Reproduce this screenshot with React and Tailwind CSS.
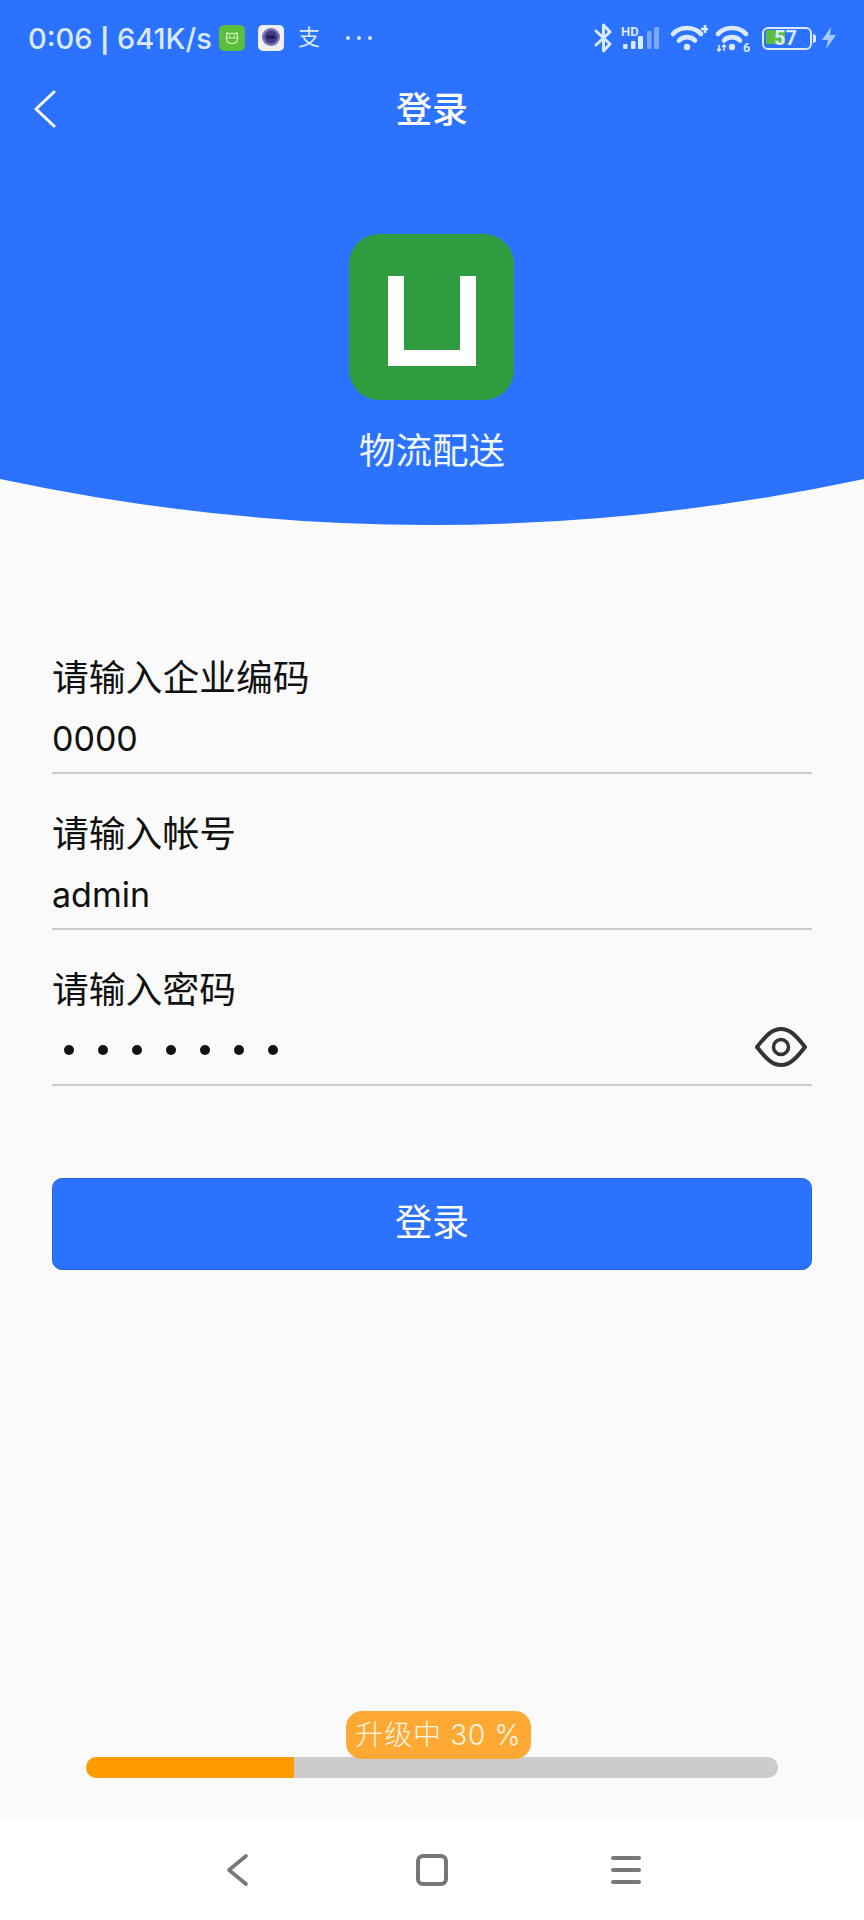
import React from 'react';

const cjk = "font-['Roboto','Noto_Sans_CJK_SC',sans-serif]";
const inter = "font-['Inter','Noto_Sans_CJK_SC',sans-serif]";

const GreenAppIcon = () => (
  <svg width="26" height="26" viewBox="0 0 26 26" className="block">
    <rect width="26" height="26" rx="5" fill="#5cbd3c" />
    <path d="M8 7.5 L9.5 9 C11.5 8.2 14.5 8.2 16.5 9 L18 7.5 L18.5 12 C19.5 15 18 18.5 13 18.5 C8 18.5 6.5 15 7.5 12 Z M8 13 H18" fill="none" stroke="#d8f5c8" strokeWidth="1.1" strokeLinejoin="round" />
    <circle cx="11" cy="11" r="0.8" fill="#d8f5c8" />
    <circle cx="15" cy="11" r="0.8" fill="#d8f5c8" />
  </svg>
);

const CameraAppIcon = () => (
  <svg width="26" height="26" viewBox="0 0 26 26" className="block">
    <rect width="26" height="26" rx="5" fill="#eef0f6" />
    <circle cx="13" cy="12" r="9" fill="#7b6fb0" />
    <circle cx="13" cy="12" r="6.5" fill="#3f3a86" />
    <rect x="9" y="10.5" width="8" height="3" rx="1" fill="#1d1b4d" />
  </svg>
);

const Bluetooth = () => (
  <svg width="19" height="30" viewBox="0 0 19 30" className="block">
    <path d="M2 8 L16 21 L9.5 28 V2 L16 9 L2 22" fill="none" stroke="#dbeaff" strokeWidth="3" strokeLinejoin="round" strokeLinecap="round" />
  </svg>
);

const HdSignal = () => (
  <div className="relative w-[38px] h-[24px]">
    <span className="absolute left-0 top-[-1px] text-[13px] leading-[13px] font-bold text-[#dbeaff] font-['Roboto',sans-serif]">HD</span>
    <svg width="38" height="24" viewBox="0 0 38 24" className="block">
      <rect x="2" y="18" width="4.5" height="5" rx="1" fill="#dbeaff" />
      <rect x="10" y="15" width="4.5" height="8" rx="1" fill="#dbeaff" />
      <rect x="17" y="10" width="5" height="13" rx="1" fill="#dbeaff" />
      <rect x="26" y="5" width="4.5" height="18" rx="1" fill="#7aa8ff" />
      <rect x="33" y="1" width="5" height="22" rx="1" fill="#7aa8ff" />
    </svg>
  </div>
);

const WifiArcs = () => (
  <>
    <path d="M3 9 C10 1 24 1 31 9" fill="none" stroke="#dbeaff" strokeWidth="4.6" strokeLinecap="round" />
    <path d="M9 15.5 C13 11 21 11 25 15.5" fill="none" stroke="#dbeaff" strokeWidth="4.6" strokeLinecap="round" />
    <circle cx="17" cy="22" r="3.2" fill="#dbeaff" />
  </>
);

const WifiPlus = () => (
  <svg width="39" height="26" viewBox="0 0 39 26" className="block">
    <g transform="translate(1 0)"><WifiArcs /></g>
    <path d="M36 0 V8 M32 4 H39" stroke="#dbeaff" strokeWidth="2.6" />
  </svg>
);

const Wifi6 = () => (
  <svg width="37" height="27" viewBox="0 0 37 27" className="block">
    <WifiArcs />
    <path d="M4 20 V26 M2 24 L4 26 L6 24 M9 26 V20 M7 22 L9 20 L11 22" fill="none" stroke="#dbeaff" strokeWidth="1.6" />
    <text x="28" y="27" fontSize="12.5" fontWeight="700" fill="#dbeaff" fontFamily="Roboto, sans-serif">6</text>
  </svg>
);

const Battery = () => (
  <div className="flex items-center gap-[1px]">
    <div className="relative w-[50px] h-[23px] rounded-[6px] border-[2.5px] border-[#dbeaff]">
      <div className="h-[14px] w-[19px] mt-[1px] ml-[2px] bg-[#5cbd3c]" />
      <span className="absolute inset-0 flex items-center justify-center pr-[3px] text-[20px] leading-none font-bold text-[#dbeaff] font-['Roboto',sans-serif]">57</span>
    </div>
    <div className="w-[3px] h-[9px] rounded-r-sm bg-[#dbeaff]" />
  </div>
);

const Bolt = () => (
  <svg width="14" height="22" viewBox="0 0 14 22" className="block">
    <path d="M9 0 L0 13 H6 L4 22 L14 8 H8 Z" fill="#a9c8ff" />
  </svg>
);

const StatusBar = () => (
  <div className="h-[76px] flex items-center justify-between pl-[28px] pr-[28px]">
    <div className="flex items-center">
      <span className={`w-[191px] text-[29px] leading-none font-medium text-[#dbeaff] whitespace-nowrap ${inter}`}>
        0:06 <span className="text-[24px] font-bold">|</span> 641K/s
      </span>
      <GreenAppIcon />
      <div className="ml-[13px]"><CameraAppIcon /></div>
      <span className={`ml-[14px] w-[22px] text-[22px] leading-none text-[#dbeaff] ${cjk}`}>支</span>
      <div className="ml-[26px] flex gap-[7px]">
        <span className="w-[4px] h-[4px] rounded-full bg-[#dbeaff]" />
        <span className="w-[4px] h-[4px] rounded-full bg-[#dbeaff]" />
        <span className="w-[4px] h-[4px] rounded-full bg-[#dbeaff]" />
      </div>
    </div>
    <div className="flex items-center">
      <Bluetooth />
      <div className="ml-[8px]"><HdSignal /></div>
      <div className="ml-[10px]"><WifiPlus /></div>
      <div className="ml-[7px]"><Wifi6 /></div>
      <div className="ml-[10px]"><Battery /></div>
      <div className="ml-[6px]"><Bolt /></div>
    </div>
  </div>
);

const Field = ({ label, children }) => (
  <div className="mb-[38px] pb-[11px] border-b-2 border-[#cccccc]">
    <div className={`h-[44px] text-[36.8px] leading-[46px] text-[#111111] ${cjk}`}>{label}</div>
    <div className={`mt-[17px] h-[44px] text-[34px] leading-[44px] text-[#111111] ${inter}`}>{children}</div>
  </div>
);

export default function App() {
  return (
    <div className="w-[864px] h-[1920px] flex flex-col bg-[#fafafa] overflow-hidden">
      {/* Blue header */}
      <div className="bg-[#2a72ff] pb-[4px]">
        <StatusBar />
        <div className="h-[66px] grid grid-cols-[1fr_auto_1fr] items-center">
          <svg width="24" height="38" viewBox="0 0 24 38" className="ml-[33px] block">
            <path d="M21 2 L3 19 L21 36" fill="none" stroke="#ffffff" strokeWidth="3" strokeLinecap="round" strokeLinejoin="round" />
          </svg>
          <div className={`pt-[3px] text-[36px] leading-[44px] font-medium text-white ${cjk}`}>登录</div>
          <div />
        </div>
        <div className="mt-[92px] flex flex-col items-center">
          <div className="mr-[2px] w-[165px] h-[166px] pt-[7px] rounded-[30px] bg-[#2e9c3f] flex items-center justify-center">
            <div className="ml-[2px] w-[88px] h-[90px] border-x-[16px] border-b-[16px] border-white" />
          </div>
          <div className={`mt-[29px] text-[36.5px] leading-[46px] text-[#f2f8ff] ${cjk}`}>物流配送</div>
        </div>
      </div>
      <svg width="864" height="46" viewBox="0 0 864 46" className="block shrink-0">
        <path d="M0 0 H864 Q432 92 0 0 Z" fill="#2a72ff" />
      </svg>

      {/* Login form */}
      <div className="mt-[131px] px-[52px]">
        <Field label="请输入企业编码">0000</Field>
        <Field label="请输入帐号">admin</Field>
        <Field label="请输入密码">
          <div className="h-full flex items-center justify-between pl-[12px] pr-[5px]">
            <div className="flex gap-[24px] mb-[2px]">
              {[0, 1, 2, 3, 4, 5, 6].map((i) => (
                <span key={i} className="w-[10px] h-[10px] rounded-full bg-[#111111]" />
              ))}
            </div>
            <svg width="52" height="40" viewBox="0 0 52 40" className="block -mt-2">
              <path d="M2 20 C12 7 18 2 26 2 C34 2 40 7 50 20 C40 33 34 38 26 38 C18 38 12 33 2 20 Z" fill="none" stroke="#333333" strokeWidth="4" strokeLinejoin="round" />
              <circle cx="26" cy="20" r="7.5" fill="none" stroke="#333333" strokeWidth="3.5" />
            </svg>
          </div>
        </Field>
        <button className={`mt-[54px] w-full h-[92px] rounded-[10px] bg-[#2a72ff] border border-[#2462d8] text-[37px] text-white ${cjk}`}>登录</button>
      </div>

      <div className="flex-1" />

      {/* Upgrade progress */}
      <div className="px-[86px] pb-[41px]">
        <div className="relative h-[21px] rounded-full bg-[#cccccc]">
          <div className="h-full w-[208px] rounded-l-full bg-[#ff9c00]" />
          <div className={`absolute left-[260px] top-[-46px] w-[185px] h-[48px] rounded-[16px] bg-[#ffa935] flex items-center justify-center text-[28px] leading-none font-light tracking-[0.7px] text-[#fff6e6] whitespace-pre ${inter}`}>升级中 30 %</div>
        </div>
      </div>

      {/* System nav bar */}
      <div className="h-[101px] bg-white flex items-start">
        <svg width="24" height="34" viewBox="0 0 24 34" className="ml-[226px] mt-[34px] block">
          <path d="M20 3 L3 17 L20 31" fill="none" stroke="#777777" strokeWidth="3.6" strokeLinecap="round" strokeLinejoin="round" />
        </svg>
        <div className="ml-[166px] mt-[35px] w-[32px] h-[32px] rounded-[7px] border-[4px] border-[#777777]" />
        <div className="ml-[163px] mt-[37px] w-[30px] flex flex-col gap-[8px]">
          <span className="h-[4px] rounded-full bg-[#777777]" />
          <span className="h-[4px] rounded-full bg-[#777777]" />
          <span className="h-[4px] rounded-full bg-[#777777]" />
        </div>
      </div>
    </div>
  );
}
